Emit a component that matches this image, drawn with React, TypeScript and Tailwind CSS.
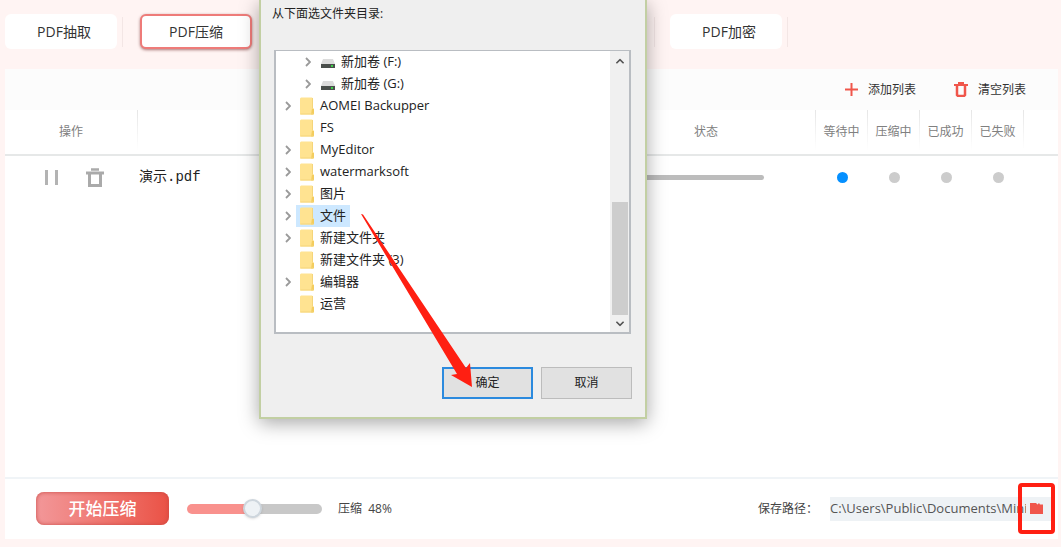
import { useState } from 'react';
import { clsx } from 'clsx';

const tabs = ['PDF抽取', 'PDF压缩', '', '', '', 'PDF加密'];

const states = ['等待中', '压缩中', '已成功', '已失败'];

const nodes = [
  { name: '新加卷 (F:)', drive: true, expandable: true },
  { name: '新加卷 (G:)', drive: true, expandable: true },
  { name: 'AOMEI Backupper', expandable: true },
  { name: 'FS' },
  { name: 'MyEditor', expandable: true },
  { name: 'watermarksoft', expandable: true },
  { name: '图片', expandable: true },
  { name: '文件', expandable: true },
  { name: '新建文件夹', expandable: true },
  { name: '新建文件夹 (3)' },
  { name: '编辑器', expandable: true },
  { name: '运营' },
];

function TrashIcon({ className }: { className?: string }) {
  return (
    <svg viewBox="0 0 18 20" fill="none" stroke="currentColor" className={className}>
      <path d="M0 5h18" strokeWidth="3" />
      <path d="M5 1.500h8" strokeWidth="2.500" />
      <path d="M3.500 5v12.500h11V5" strokeWidth="3" />
    </svg>
  );
}

function FolderIcon() {
  return (
    <svg viewBox="0 0 14 18" className="h-[18px] w-[14px] shrink-0">
      <path d="M0 1.500 1 .500h11l1 1V11l1 1v5l-1 .500H0z" fill="#ffe391" />
      <path d="M12 11.500 14 12v5l-1 .500h-2z" fill="#f3cd5f" />
      <path d="M.500 17h13M12.500 1v10" stroke="#f5d57a" />
    </svg>
  );
}

function DriveIcon() {
  return (
    <svg viewBox="0 0 14 10" className="mt-1 h-[10px] w-[14px] shrink-0">
      <path d="M2 0h10l2 5H0z" fill="#dcdcdc" />
      <path d="M0 5h14v4H0z" fill="#4a4f4c" />
      <path d="M10 6h2v2h-2z" fill="#3ed04a" />
    </svg>
  );
}

function Chevron({ className }: { className?: string }) {
  return (
    <svg viewBox="0 0 6 10" fill="none" stroke="currentColor" className={className}>
      <path d="m1 1 4 4-4 4" strokeWidth="1.800" />
    </svg>
  );
}

function Tabs() {
  return (
    <nav className="flex pt-[14px] pb-5 pl-[5px]">
      {tabs.map((tab, i) => (
        <div key={i} className="flex w-[133px] shrink-0 items-center">
          {tab ? (
            <button
              type="button"
              className={clsx(
                'h-[35px] w-[112px] rounded-md bg-white text-[14px]',
                i === 1 ? 'ml-0.5 border-2 border-[#ee7b79] shadow-[0_1px_3px_#a87878]' : 'pl-1.5'
              )}
            >
              {tab}
            </button>
          ) : (
            <div className="h-[35px] w-[108px] rounded-md bg-white" />
          )}
          {i !== 1 && <span className="mr-[15px] ml-auto h-[30px] w-px bg-[#f3e6e5]" />}
        </div>
      ))}
    </nav>
  );
}

function HeadCell({ label, divider = true }: { label?: string; divider?: boolean }) {
  return (
    <th className="p-0 font-normal whitespace-nowrap">
      <div className="flex h-11">
        <span className="flex-1 self-center text-center">{label}</span>
        {divider && <span className="h-10 w-px bg-linear-to-b from-[#e6e6e6] to-white" />}
      </div>
    </th>
  );
}

function Files() {
  return (
    <table className="w-full table-fixed border-collapse text-[#666]">
      <colgroup>
        <col className="w-[133px]" />
        <col />
        <col className="w-[219px]" />
        <col className="w-[52px]" />
        <col className="w-[52px]" />
        <col className="w-[52px]" />
        <col className="w-[52px]" />
        <col className="w-[34px]" />
      </colgroup>
      <thead>
        <tr className="border-b-2 border-[#e6e8e8] text-[12px] text-[#808080]">
          <HeadCell label="操作" />
          <HeadCell divider={false} />
          <HeadCell label="状态" />
          {states.map((state) => (
            <HeadCell key={state} label={state} />
          ))}
          <HeadCell divider={false} />
        </tr>
      </thead>
      <tbody>
        <tr className="h-11">
          <td>
            <div className="flex items-center gap-7 pl-10">
              <button type="button" aria-label="暂停" className="flex h-[15px] w-[13px] justify-between">
                <span className="w-[3px] bg-[#b3b3b3]" />
                <span className="w-[3px] bg-[#b3b3b3]" />
              </button>
              <button type="button" aria-label="删除">
                <TrashIcon className="h-5 w-[18px] text-[#aaaaaa]" />
              </button>
            </div>
          </td>
          <td className="pl-px font-['Liberation_Mono','Noto_Sans_CJK_SC',monospace] text-[14px] text-[#222]">
            演示.pdf
          </td>
          <td className="pr-[52px] pl-10">
            <div className="h-[5px] rounded-full bg-[#bcbcbc]" />
          </td>
          {states.map((state, i) => (
            <td key={state}>
              <div className={clsx('mx-auto size-[11px] rounded-full', i === 0 ? 'bg-[#0590ff]' : 'bg-[#cccccc]')} />
            </td>
          ))}
          <td />
        </tr>
      </tbody>
    </table>
  );
}

function Footer() {
  const [rate, setRate] = useState(48);

  return (
    <footer className="flex h-[62px] items-center border-t-2 border-[#f0f4f7] pr-1.5 pb-px pl-[31px] text-[12px] text-[#444]">
      <button
        type="button"
        className="h-[33px] w-[133px] rounded-lg bg-linear-to-r from-[#f29799] to-[#ea5145] text-[17px] font-medium text-white shadow-[inset_0_0_4px_#c94a44]"
      >
        开始压缩
      </button>
      <input
        type="range"
        id="rate"
        value={rate}
        onChange={(e) => setRate(Number(e.target.value))}
        style={{ backgroundImage: `linear-gradient(to right, #f9918d ${rate}%, #c8c8c8 ${rate}%)` }}
        className="ml-[18px] h-[10px] w-[135px] appearance-none rounded-full [&::-webkit-slider-thumb]:size-[19px] [&::-webkit-slider-thumb]:appearance-none [&::-webkit-slider-thumb]:rounded-full [&::-webkit-slider-thumb]:border-2 [&::-webkit-slider-thumb]:border-[#ced6dd] [&::-webkit-slider-thumb]:bg-[#eef2f5] [&::-webkit-slider-thumb]:shadow-sm"
      />
      <label htmlFor="rate" className="ml-4 whitespace-pre">
        压缩  {rate}%
      </label>
      <label htmlFor="path" className="ml-auto">
        保存路径：
      </label>
      <div className="ml-3 flex h-6 w-[222px] items-center bg-[#eef2f5]">
        <input
          id="path"
          defaultValue="C:\Users\Public\Documents\Mini"
          className="w-[196px] bg-transparent text-[13px] text-[#555] outline-none"
        />
        <div className="relative ml-1">
          <button type="button" aria-label="选择文件夹" className="block">
            <svg viewBox="0 0 13 11" className="h-[11px] w-[13px]">
              <path d="M0 0h6l1.500 1.500L9 0l1 1.500h3V11H0z" fill="#f0564b" />
            </svg>
          </button>
          <div className="pointer-events-none absolute -inset-x-3 -inset-y-5 rounded-sm border-4 border-[#ff1f12]" />
        </div>
      </div>
    </footer>
  );
}

function FolderDialog() {
  const [selected, setSelected] = useState('文件');

  return (
    <div
      role="dialog"
      aria-labelledby="dialog-title"
      className="absolute top-0 left-[259px] w-[388px] border-2 border-t-0 border-[#c2cfa3] bg-[#efefef] px-[13px] pb-[18px] text-[13px] text-[#222] shadow-[0_4px_18px_0_rgba(0,0,0,0.35)]"
    >
      <p id="dialog-title" className="-ml-0.5 pt-1.5 text-[12px] leading-4">
        从下面选文件夹目录:
      </p>
      <div className="mt-7 flex h-[284px] w-[357px] border-2 border-t border-[#b9bdc2] bg-white">
        <ul className="flex-1">
          {nodes.map((node) => (
            <li key={node.name} className={clsx('flex h-[22px] items-center', node.drive ? 'pl-7' : 'pl-2')}>
              <span className="w-3 text-[#9a9a9a]">
                {node.expandable && <Chevron className="ml-px h-[10px] w-1.5" />}
              </span>
              <button
                type="button"
                onClick={() => setSelected(node.name)}
                className={clsx(
                  'flex h-[22px] items-center pr-1 whitespace-nowrap',
                  node.drive ? 'gap-1.5 pl-[5px]' : 'gap-1.5 pl-1',
                  selected === node.name && 'bg-[#cde8ff]'
                )}
              >
                {node.drive ? <DriveIcon /> : <FolderIcon />}
                {node.name}
              </button>
            </li>
          ))}
        </ul>
        <div className="flex w-[19px] flex-col items-center bg-[#f0f0f0] pt-1.5 pb-1 text-[#555]">
          <Chevron className="h-[9px] w-1.5 -rotate-90" />
          <div className="mt-auto mb-1 h-[113px] w-4 bg-[#cdcdcd]" />
          <Chevron className="h-[9px] w-1.5 rotate-90" />
        </div>
      </div>
      <div className="mt-[33px] flex justify-end gap-2 text-[12px]">
        <button type="button" className="h-8 w-[91px] border-2 border-[#2b8ade] bg-[#e1e1e1]">
          确定
        </button>
        <button type="button" className="h-8 w-[91px] border border-[#bcbcbc] bg-[#e1e1e1]">
          取消
        </button>
      </div>
      <svg
        viewBox="0 0 112 174"
        className="pointer-events-none absolute top-[214px] left-[100px] h-[174px] w-[112px]"
      >
        <path d="m0 0 2 .500 103 153.500 4-5 2 24-21-12 6-1z" fill="#ff1f12" />
      </svg>
    </div>
  );
}

export default function App() {
  return (
    <div className="relative flex min-h-screen flex-col overflow-hidden bg-[#fff4f3] pb-2 font-['Open_Sans','Noto_Sans_CJK_SC',sans-serif] text-[#333]">
      <Tabs />
      <main className="mr-[3px] ml-[5px] flex flex-1 flex-col bg-white">
        <div className="flex h-[41px] items-center justify-end gap-[38px] bg-[#fcfcfc] pr-8 text-[12px]">
          <button type="button" className="flex items-center gap-[10px]">
            <svg viewBox="0 0 13 13" className="size-[13px]" stroke="#f0564b" strokeWidth="2">
              <path d="M6.500 0v13M0 6.500h13" />
            </svg>
            添加列表
          </button>
          <button type="button" className="flex items-center gap-[10px]">
            <svg viewBox="0 0 14 15" className="h-[15px] w-[14px]" fill="none" stroke="#f0564b" strokeWidth="2">
              <path d="M0 3h14M4 1h6" />
              <path d="M3 3v10l1 1h6l1-1V3" strokeWidth="2.500" />
            </svg>
            清空列表
          </button>
        </div>
        <div className="flex-1">
          <Files />
        </div>
        <Footer />
      </main>
      <FolderDialog />
    </div>
  );
}
